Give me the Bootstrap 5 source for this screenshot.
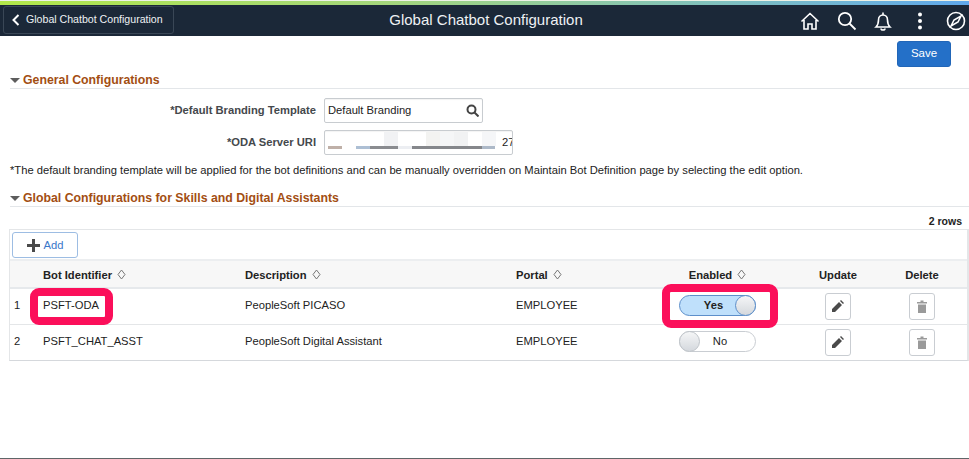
<!DOCTYPE html>
<html lang="en">
<head>
    <meta charset="UTF-8">
    <meta name="viewport" content="width=device-width, initial-scale=1.0">
    <title>Global Chatbot Configuration</title>
    <link href="https://cdn.jsdelivr.net/npm/bootstrap@5.3.2/dist/css/bootstrap.min.css" rel="stylesheet">
    <style>
        html, body { height: 459px; overflow: hidden; }
        body {
            font-family: "Liberation Sans", Arial, sans-serif;
            font-size: 11.2px;
            color: #1f1f1f;
            background: #fff;
        }
        .page-wrap { height: 459px; border-bottom: 1px solid #5f6668; }

        /* banner */
        .top-strip { height: 5px; border-top: 1px solid #eef2e6; background: linear-gradient(90deg, #b2e84a 0%, #a4d67c 40%, #7fc0c0 75%, #5fa8ec 100%); }
        .top-bar { height: 31px; background: #1b2838; color: #fff; }
        .back-btn {
            width: 171px; height: 28px; margin: 0 0 1px 3px;
            border: 1px solid #3a4756; border-radius: 3px;
            background: #1b2838; color: #eef1f4; font-size: 10.6px; white-space: nowrap;
            padding: 0 0 0 8px; gap: 6px;
        }
        .bar-title { font-size: 15px; color: #eef1f4; margin-right: 2px; }
        .bar-icons { gap: 16.5px; padding-right: 3px; }
        .bar-icons svg { display: block; }

        /* save row */
        .save-row { height: 36px; padding: 5px 18px 0 0; }
        .save-btn {
            width: 54px; height: 26px; padding: 0; font-size: 11.5px;
            background: #2470c8; border: 1px solid #2166b8; border-radius: 3px; color: #fff;
        }

        /* group boxes */
        .group-head {
            margin: 0 0 0 10px; height: 17px;
            border-bottom: 1px solid #e3e6e9;
            color: #a34e12; font-size: 12.3px; font-weight: 700; line-height: 15px;
        }
        .caret-down {
            width: 0; height: 0; margin-right: 3px;
            border-left: 5px solid transparent; border-right: 5px solid transparent;
            border-top: 5px solid #5d5d5d;
        }
        .form-line { height: 32px; }
        .form-first { margin-top: 5px; }
        .field-label { width: 324px; padding-right: 8px; text-align: right; font-weight: 700; color: #44484c; }
        .text-box {
            width: 159px; height: 25px; border: 1px solid #c8ccd0; border-radius: 2px;
            padding: 0 3px; color: #222; box-shadow: inset 0 1px 1px rgba(0,0,0,.05);
        }
        .uri-box { width: 189px; overflow: hidden; padding: 0; }
        .blur-strip { width: 177px; height: 100%; flex: none; }
        .uri-tail { width: 10px; overflow: hidden; white-space: nowrap; }
        .note-text { margin: 4px 0 0 10px; height: 28px; line-height: 16px; color: #222; }

        /* grid */
        .row-count { height: 22px; padding: 7px 7px 0 0; font-weight: 700; font-size: 10.5px; text-align: right; color: #222; }
        .grid-box { margin-left: 9px; border: 1px solid #e4e6e8; border-bottom-color: #d5d8dc; border-right-width: 2px; }
        .add-bar { height: 29px; padding: 2px 0 0 2px; }
        .add-btn {
            width: 66px; height: 26px; padding: 0; font-size: 11.2px; color: #3b78c9;
            background: #fff; border: 1px solid #9dbde3; border-radius: 3px;
        }
        .grid-table { width: 100%; table-layout: fixed; border-collapse: collapse; }
        .grid-table th {
            height: 28px; background: #f7f7f7; font-weight: 700; color: #222;
            border-top: 2px solid #eceef0; border-bottom: 2px solid #e6e9ec; padding: 2px 0 0;
        }
        .grid-table td { height: 36px; padding: 0 0 2px; border-bottom: 1px solid #e4e6e8; color: #222; position: relative; }
        .grid-table td.btn-cell { padding-bottom: 0; }
        .grid-table tr:last-child td { border-bottom: 0; }
        .sort-ico { margin-left: 2px; vertical-align: -1px; }
        .col-nudge { padding-right: 2px !important; }
        .col-shift { padding-left: 1px !important; }

        .toggle-pill {
            width: 77px; height: 21px; border-radius: 11px; border: 1px solid #c9cdd2; background: #fff;
            position: relative; line-height: 19px; text-align: center; padding-left: 5px; margin: 0 auto;
        }
        .toggle-pill.is-on { background: #bfe0fb; border-color: #5d8fca; font-weight: 700; padding: 0 8px 0 0; }
        .toggle-knob {
            position: absolute; top: -1px; left: -1px; width: 21px; height: 21px; border-radius: 50%;
            border: 1px solid #bfc4c9; background: linear-gradient(#f5f6f7, #d4d8dd);
        }
        .is-on .toggle-knob { left: auto; right: -1px; border-color: #5d8fca; }
        .icon-btn {
            width: 26px; height: 27px; padding: 0; margin: 0 auto;
            background: #fff; border: 1px solid #c9cdd2; border-radius: 3px;
        }
        .red-mark {
            position: absolute; border: 8px solid #fb0f5a; border-radius: 9px; pointer-events: none;
        }
        .mark-id { left: -13px; top: -1px; width: 83px; height: 37px; }
        .mark-toggle { left: 23px; top: -5px; width: 116px; height: 44px; }
    </style>
</head>
<body>
    <div class="page-wrap">
        <div class="top-strip"></div>
        <!-- Banner -->
        <div class="top-bar d-flex align-items-center justify-content-between">
            <button class="back-btn d-flex align-items-center" type="button">
                <svg width="8" height="12" viewBox="0 0 8 12"><path d="M6.500 1 1.500 6l5 5" fill="none" stroke="#fff" stroke-width="2"/></svg>
                <span>Global Chatbot Configuration</span>
            </button>
            <div class="bar-title">Global Chatbot Configuration</div>
            <div class="bar-icons d-flex align-items-center">
                <svg width="20" height="20" viewBox="0 0 20 20" fill="none" stroke="#fff" stroke-width="1.6"><path d="M1.500 10.500 10 2.500l8.500 8M4 9v9h4v-5h4v5h4V9"/></svg>
                <svg width="20" height="20" viewBox="0 0 20 20" fill="none" stroke="#fff" stroke-width="1.8"><circle cx="8" cy="8" r="6.200"/><path d="m12.500 12.500 6 6"/></svg>
                <svg width="20" height="20" viewBox="0 0 20 20" fill="none" stroke="#fff" stroke-width="1.6"><path d="M3 16c2-2 2.500-3.500 2.500-7 0-3 2-5 4.500-5s4.500 2 4.500 5c0 3.500.5 5 2.500 7zM10 1.500V4M8 17.500c0 2 4 2 4 0"/></svg>
                <svg width="20" height="20" viewBox="0 0 20 20" fill="#fff"><circle cx="10" cy="3.500" r="2"/><circle cx="10" cy="10" r="2"/><circle cx="10" cy="16.500" r="2"/></svg>
                <svg width="20" height="20" viewBox="0 0 20 20" fill="none" stroke="#fff" stroke-width="1.600"><circle cx="10" cy="10" r="8.500"/><path d="m5 15 3-6 7-4-3 6z"/></svg>
            </div>
        </div>

        <div class="save-row d-flex justify-content-end">
            <button class="save-btn" type="button">Save</button>
        </div>

        <!-- General Configurations -->
        <div class="group-head d-flex align-items-center"><span class="caret-down"></span>General Configurations</div>
        <div class="form-line form-first d-flex align-items-center">
            <div class="field-label">*Default Branding Template</div>
            <div class="text-box d-flex align-items-center justify-content-between">
                <span>Default Branding</span>
                <svg width="13" height="13" viewBox="0 0 13 13" fill="none" stroke="#444" stroke-width="2"><circle cx="5.500" cy="5.500" r="4"/><path d="m8.500 8.500 4 4"/></svg>
            </div>
        </div>
        <div class="form-line d-flex align-items-center">
            <div class="field-label">*ODA Server URI</div>
            <div class="text-box uri-box d-flex align-items-center">
                <svg class="blur-strip" viewBox="0 0 177 23">
                    <rect x="59" y="1" width="14" height="14" fill="#f1f2f4"/>
                    <rect x="101" y="1" width="14" height="14" fill="#f3f3f1"/>
                    <rect x="115" y="1" width="14" height="14" fill="#f5f6f7"/>
                    <rect x="129" y="1" width="14" height="14" fill="#f1f2f3"/>
                    <rect x="157" y="1" width="14" height="14" fill="#f5f6f8"/>
                    <rect x="3" y="15" width="14" height="3" fill="#bfb0a8"/>
                    <rect x="31" y="15" width="14" height="3" fill="#adbfd4"/>
                    <rect x="45" y="15" width="28" height="3" fill="#8a8c90"/>
                    <rect x="73" y="15" width="14" height="3" fill="#eceef2"/>
                    <rect x="87" y="15" width="70" height="3" fill="#85878b"/>
                    <rect x="157" y="15" width="13" height="3" fill="#adb9c8"/>
                </svg>
                <span class="uri-tail">27</span>
            </div>
        </div>
        <p class="note-text">*The default branding template will be applied for the bot definitions and can be manually overridden on Maintain Bot Definition page by selecting the edit option.</p>

        <!-- Skills grid -->
        <div class="group-head d-flex align-items-center"><span class="caret-down"></span>Global Configurations for Skills and Digital Assistants</div>
        <div class="row-count">2 rows</div>
        <div class="grid-box">
            <div class="add-bar">
                <button class="add-btn d-inline-flex align-items-center justify-content-center gap-1" type="button">
                    <svg width="13" height="13" viewBox="0 0 13 13" fill="#4a4a4a"><path d="M5 0h3v5h5v3H8v5H5V8H0V5h5z"/></svg>
                    Add
                </button>
            </div>
            <table class="grid-table">
                <colgroup>
                    <col style="width: 33px"><col style="width: 202px"><col style="width: 271px"><col style="width: 123px">
                    <col style="width: 157px"><col style="width: 83px"><col>
                </colgroup>
                <thead>
                    <tr>
                        <th></th>
                        <th>Bot Identifier <svg class="sort-ico" width="9" height="11" viewBox="0 0 9 11" fill="none" stroke="#777"><path d="M4.500 1 8 5.500 4.500 10 1 5.500z"/></svg></th>
                        <th>Description <svg class="sort-ico" width="9" height="11" viewBox="0 0 9 11" fill="none" stroke="#777"><path d="M4.500 1 8 5.500 4.500 10 1 5.500z"/></svg></th>
                        <th>Portal <svg class="sort-ico" width="9" height="11" viewBox="0 0 9 11" fill="none" stroke="#777"><path d="M4.500 1 8 5.500 4.500 10 1 5.500z"/></svg></th>
                        <th class="text-center">Enabled <svg class="sort-ico" width="9" height="11" viewBox="0 0 9 11" fill="none" stroke="#777"><path d="M4.500 1 8 5.500 4.500 10 1 5.500z"/></svg></th>
                        <th class="text-center col-shift">Update</th>
                        <th class="text-center col-nudge">Delete</th>
                    </tr>
                </thead>
                <tbody>
                    <tr>
                        <td class="ps-1">1</td>
                        <td><span class="red-mark mark-id"></span>PSFT-ODA</td>
                        <td>PeopleSoft PICASO</td>
                        <td>EMPLOYEE</td>
                        <td><span class="red-mark mark-toggle"></span><div class="toggle-pill is-on">Yes<span class="toggle-knob"></span></div></td>
                        <td class="btn-cell"><button class="icon-btn d-flex align-items-center justify-content-center" type="button"><svg width="12" height="12" viewBox="0 0 12 12" fill="#4a4a4a"><path d="M0 12V9l7-7 3 3-7 7zM8 1l1-1 3 3-1 1z"/></svg></button></td>
                        <td class="btn-cell col-nudge"><button class="icon-btn d-flex align-items-center justify-content-center" type="button"><svg width="10" height="13" viewBox="0 0 10 13" fill="#9a9a9a"><path d="M0 2h3.500V.5h3V2H10v1.500H0zM1 4.500h8V13H1z"/></svg></button></td>
                    </tr>
                    <tr>
                        <td class="ps-1">2</td>
                        <td>PSFT_CHAT_ASST</td>
                        <td>PeopleSoft Digital Assistant</td>
                        <td>EMPLOYEE</td>
                        <td><div class="toggle-pill">No<span class="toggle-knob"></span></div></td>
                        <td class="btn-cell"><button class="icon-btn d-flex align-items-center justify-content-center" type="button"><svg width="12" height="12" viewBox="0 0 12 12" fill="#4a4a4a"><path d="M0 12V9l7-7 3 3-7 7zM8 1l1-1 3 3-1 1z"/></svg></button></td>
                        <td class="btn-cell col-nudge"><button class="icon-btn d-flex align-items-center justify-content-center" type="button"><svg width="10" height="13" viewBox="0 0 10 13" fill="#9a9a9a"><path d="M0 2h3.500V.5h3V2H10v1.500H0zM1 4.500h8V13H1z"/></svg></button></td>
                    </tr>
                </tbody>
            </table>
        </div>
    </div>
    <script src="https://cdn.jsdelivr.net/npm/bootstrap@5.3.2/dist/js/bootstrap.bundle.min.js"></script>
</body>
</html>
